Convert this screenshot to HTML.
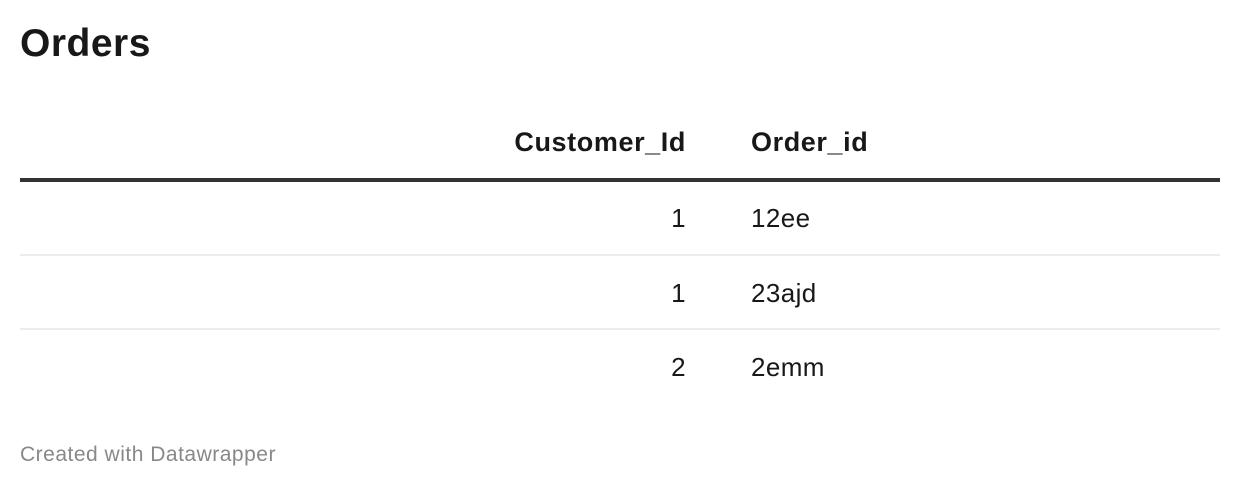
<!DOCTYPE html>
<html><head><style>
body{margin:0;width:1240px;height:488px;background:#fff;font-family:"Liberation Sans",Arial,sans-serif;color:#181818;position:relative;overflow:hidden}
div{position:absolute;white-space:nowrap}
.h{font-weight:bold;font-size:27px;top:127px;letter-spacing:0.6px}
.c{font-size:26px;letter-spacing:0.4px}
.line{left:20px;width:1200px}
</style></head><body>
<div style="left:20px;top:22px;font-size:39px;font-weight:bold;letter-spacing:0.5px">Orders</div>
<div class="h" style="right:554px">Customer_Id</div>
<div class="h" style="left:751px">Order_id</div>
<div class="line" style="top:178px;height:4px;background:#333"></div>
<div class="c" style="right:554px;top:203px">1</div>
<div class="c" style="left:751px;top:203px">12ee</div>
<div class="line" style="top:254px;height:2px;background:#ececec"></div>
<div class="c" style="right:554px;top:278px">1</div>
<div class="c" style="left:751px;top:278px">23ajd</div>
<div class="line" style="top:328px;height:2px;background:#ececec"></div>
<div class="c" style="right:554px;top:352px">2</div>
<div class="c" style="left:751px;top:352px">2emm</div>
<div style="left:20px;top:443px;font-size:21px;color:#888;letter-spacing:0.5px">Created with Datawrapper</div>
</body></html>
